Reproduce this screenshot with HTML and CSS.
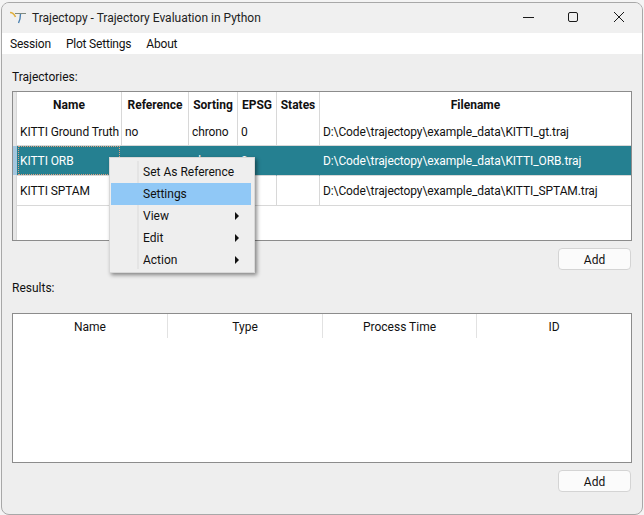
FILE: index.html
```html
<!DOCTYPE html>
<html lang="en">
<head>
    <meta charset="UTF-8">
    <title>Trajectopy - Trajectory Evaluation in Python</title>
    <link rel="stylesheet" href="styles.css">
</head>
<body>
    <div class="window">
        <div class="titlebar">
            <svg class="app-icon" width="16" height="16" viewBox="0 0 16 16" fill="none">
                <path d="M0 2.5 Q3.5 2.5 5.5 7" stroke="#e0b040" stroke-width="1.6"/>
                <path d="M5 3.5 H16" stroke="#7f8a80" stroke-width="1.1"/>
                <path d="M10.5 4 Q10.5 9 8.5 13" stroke="#4a80b0" stroke-width="1.4"/>
            </svg>
            <span class="title-text">Trajectopy - Trajectory Evaluation in Python</span>
            <div class="window-buttons">
                <svg width="46" height="30" viewBox="0 0 46 30" fill="none"><path d="M19 14.5 H30" stroke="#1a1a1a"/></svg>
                <svg width="46" height="30" viewBox="0 0 46 30" fill="none"><rect x="18.5" y="9.5" width="9" height="9" rx="1.5" stroke="#1a1a1a"/></svg>
                <svg width="46" height="30" viewBox="0 0 46 30" fill="none"><path d="M18 9 L28 19 M28 9 L18 19" stroke="#1a1a1a"/></svg>
            </div>
        </div>
        <div class="menubar">
            <span>Session</span>
            <span>Plot Settings</span>
            <span>About</span>
        </div>
        <div class="content">
            <div class="label">Trajectories:</div>
            <div class="table-box traj-box">
                <table class="traj">
                    <thead>
                        <tr>
                            <th class="c-name">Name</th>
                            <th class="c-ref">Reference</th>
                            <th class="c-sort">Sorting</th>
                            <th class="c-epsg">EPSG</th>
                            <th class="c-states">States</th>
                            <th>Filename</th>
                        </tr>
                    </thead>
                    <tbody>
                        <tr>
                            <td>KITTI Ground Truth</td><td>no</td><td>chrono</td><td>0</td><td></td>
                            <td>D:\Code\trajectopy\example_data\KITTI_gt.traj</td>
                        </tr>
                        <tr class="selected">
                            <td><span class="focus">KITTI ORB</span></td><td>no</td><td>chrono</td><td>0</td><td></td>
                            <td>D:\Code\trajectopy\example_data\KITTI_ORB.traj</td>
                        </tr>
                        <tr>
                            <td>KITTI SPTAM</td><td>no</td><td>chrono</td><td>0</td><td></td>
                            <td>D:\Code\trajectopy\example_data\KITTI_SPTAM.traj</td>
                        </tr>
                    </tbody>
                </table>
            </div>
            <div class="actions"><button>Add</button></div>
            <div class="label results-label">Results:</div>
            <div class="table-box res-box">
                <div class="res-head">
                    <span>Name</span>
                    <span>Type</span>
                    <span>Process Time</span>
                    <span>ID</span>
                </div>
            </div>
            <div class="actions"><button>Add</button></div>
        </div>
        <div class="context-menu">
            <div class="item">Set As Reference</div>
            <div class="item active">Settings</div>
            <div class="item sub">View</div>
            <div class="item sub">Edit</div>
            <div class="item sub">Action</div>
        </div>
    </div>
</body>
</html>
```

FILE: styles.css
```css
html, body {
    margin: 0;
    height: 100%;
    background: #f4f4f4;
}
body {
    font-family: Roboto, "Open Sans", sans-serif;
    font-size: 12px;
    color: #111;
    overflow: hidden;
}
.window {
    position: relative;
    box-sizing: border-box;
    width: 642px;
    height: 513px;
    margin: 2px 0 0 1px;
    background: #eeeeee;
    border: 1px solid #a8a8a8;
    border-radius: 8px;
    overflow: hidden;
}
.titlebar {
    display: flex;
    align-items: center;
    height: 30px;
    padding-left: 8px;
    background: #f0f0f0;
}
.app-icon {
    margin-right: 6px;
}
.title-text {
    color: #222;
}
.window-buttons {
    margin-left: auto;
    display: flex;
}
.menubar {
    display: flex;
    align-items: center;
    gap: 15px;
    height: 21px;
    padding-left: 8px;
    letter-spacing: -0.2px;
    background: #fff;
}
.content {
    padding: 14px 10px 0 10px;
}
.label {
    box-sizing: border-box;
    height: 23px;
    padding-top: 2px;
}
.table-box {
    box-sizing: border-box;
    width: 620px;
    background: #fff;
    border: 1px solid #8c8c8c;
}
.traj-box {
    position: relative;
    height: 150px;
    padding-left: 4px;
    background: linear-gradient(to right, #e6e6e6 3px, #d8d8d8 3px, #d8d8d8 4px, #fff 4px);
}
/* row header of the selected row */
.traj-box::before {
    content: "";
    position: absolute;
    left: 0;
    top: 54px;
    width: 4px;
    height: 29px;
    background: #a4c6de;
}
table.traj {
    border-collapse: separate;
    border-spacing: 0;
    table-layout: fixed;
    width: 614px;
    background: #fff;
}
.traj th {
    box-sizing: border-box;
    height: 26px;
    padding: 0 0 1px;
    font-weight: 700;
    border-right: 1px solid #d8d8d8;
}
.traj td {
    box-sizing: border-box;
    height: 30px;
    padding: 0 3px;
    white-space: nowrap;
    overflow: hidden;
    letter-spacing: -0.1px;
    border-right: 1px solid #d8d8d8;
    border-bottom: 1px solid #d8d8d8;
}
.traj tbody tr:first-child td {
    height: 28px;
}
.traj th:last-child, .traj td:last-child {
    border-right: none;
}
.c-name { width: 105px; }
.c-ref { width: 67px; }
.c-sort { width: 49px; }
.c-epsg { width: 39px; }
.c-states { width: 43px; }
.selected td {
    padding-top: 1px;
    background: #258091;
    color: #fff;
    border-right-color: #258091;
}
.selected td:first-child {
    padding: 0 1px;
}
.focus {
    display: block;
    padding: 2px 0 0 2px;
    line-height: 27px;
    outline: 1px dotted #e0a080;
    outline-offset: -1px;
}
.actions {
    display: flex;
    justify-content: flex-end;
    padding: 7px 1px 0 0;
    height: 22px;
}
button {
    width: 73px;
    height: 22px;
    padding: 2px 0 0;
    font: inherit;
    color: #111;
    background: #fbfbfb;
    border: 1px solid #d4d4d4;
    border-radius: 4px;
}
.results-label {
    margin-top: 9px;
    height: 34px;
}
.res-box {
    height: 150px;
}
.res-head {
    display: grid;
    grid-template-columns: 155px 155px 154px 154px;
    height: 24px;
}
.res-head span {
    display: flex;
    align-items: center;
    justify-content: center;
    padding-top: 2px;
    border-right: 1px solid #e2e2e2;
}
.res-head span:last-child {
    border-right: none;
}
.context-menu {
    position: absolute;
    left: 107px;
    top: 154px;
    box-sizing: border-box;
    width: 146px;
    height: 116px;
    padding: 3px 3px 3px 1px;
    background: #eeeeee;
    background-image: linear-gradient(#e4e4e4, #e4e4e4);
    background-size: 2px 108px;
    background-position: 27px 3px;
    background-repeat: no-repeat;
    border: 1px solid #d8d8d8;
    box-shadow: 2px 2px 4px rgba(0, 0, 0, 0.45);
}
.item {
    position: relative;
    height: 22px;
    line-height: 22px;
    padding-left: 32px;
}
.item.active {
    background: #90c8f6;
}
.item.sub::after {
    content: "";
    position: absolute;
    right: 12px;
    top: 7px;
    border-left: 4px solid #111;
    border-top: 4px solid transparent;
    border-bottom: 4px solid transparent;
}
```
